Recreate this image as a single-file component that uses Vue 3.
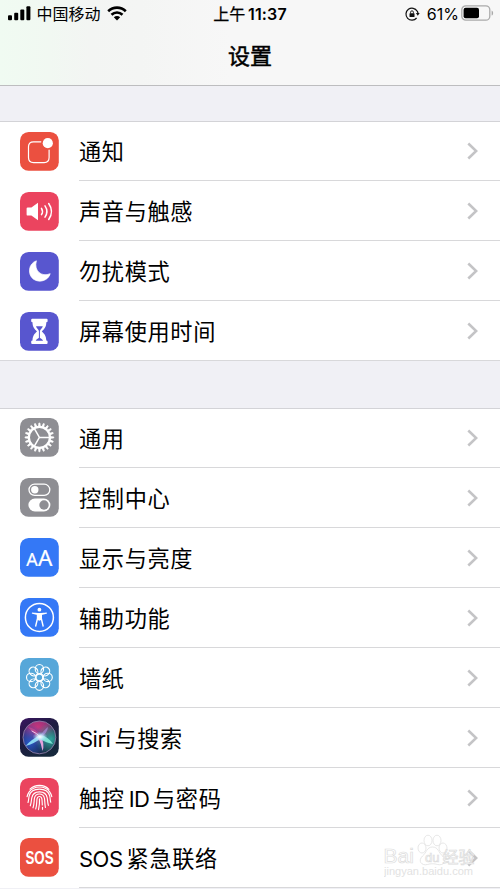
<script setup>
const groups = [
  {
    name: 'first',
    rows: [
      { icon: 'notify', label: '通知', bg: '#eb5040' },
      { icon: 'sound', label: '声音与触感', bg: '#eb445f' },
      { icon: 'moon', label: '勿扰模式', bg: '#5856cf' },
      { icon: 'hourglass', label: '屏幕使用时间', bg: '#5856cf' },
    ],
  },
  {
    name: 'second',
    rows: [
      { icon: 'gear', label: '通用', bg: '#8e8e93' },
      { icon: 'control', label: '控制中心', bg: '#8e8e93' },
      { icon: 'display', label: '显示与亮度', bg: '#3478f6' },
      { icon: 'access', label: '辅助功能', bg: '#3478f6' },
      { icon: 'wallpaper', label: '墙纸', bg: '#57a7d9' },
      { icon: 'siri', latin: 'Siri', label: '与搜索', bg: '#1b1b3a' },
      { icon: 'touch', label: '触控', latin2: 'ID', label2: '与密码', bg: '#eb445f' },
      { icon: 'sos', latin: 'SOS', label: '紧急联络', bg: '#eb5040' },
    ],
  },
]
const teeth = Array.from({ length: 20 }, (_, i) => i * 18)
const petals = Array.from({ length: 8 }, (_, i) => i * 45)
</script>

<template>
  <main class="phone">
    <header class="header">
      <div class="status">
        <div class="carrier">
          <svg class="signal" width="23" height="15" viewBox="0 0 23 15">
            <rect x="0" y="9.2" width="4" height="5" rx="1" />
            <rect x="6.2" y="6.8" width="4" height="7.4" rx="1" />
            <rect x="12.3" y="3.6" width="4" height="10.6" rx="1" />
            <rect x="18.4" y="0.2" width="4" height="14" rx="1" />
          </svg>
          <span class="operator">中国移动</span>
          <svg class="wifi" width="20" height="15" viewBox="0 0 20 15">
            <path d="M1.2 5.2C6.2.4 13.8.4 18.8 5.2" />
            <path d="M4.5 8.7c3.1-3 7.9-3 11 0" />
            <path class="solid" d="M6.8 11.2c1.8-1.6 4.6-1.6 6.4 0L10 14.4z" />
          </svg>
        </div>
        <div class="time"><span class="am">上午</span>11:37</div>
        <div class="power">
          <svg width="15" height="14" viewBox="0 0 15 14">
            <path d="M12.2 4.2A6 6 0 1 0 11.6 11M12.3 4.1A6 6 0 0 1 13 7" fill="none" stroke="#111" stroke-width="1.2" />
            <path d="M10.9 6.1h3.8l-1.9 2.6z" fill="#111" />
            <rect x="4.5" y="6.2" width="5" height="3.8" rx=".5" fill="#111" />
            <path d="M5.6 6.5V5.2a1.400 1.400 0 0 1 2.800 0v1.300" fill="none" stroke="#111" stroke-width=".9" />
          </svg>
          <span class="percent">61%</span>
          <svg class="battery" width="33" height="16" viewBox="0 0 33 16">
            <rect x=".8" y=".8" width="28" height="14.4" rx="4" fill="none" stroke="#aaa" stroke-width="1.3" />
            <rect x="2.6" y="2.8" width="15.4" height="10.4" rx="2" fill="#000" />
            <path d="M30.6 5.4c2 .8 2 4.4 0 5.2z" fill="#aaa" />
          </svg>
        </div>
      </div>
      <h1 class="title">设置</h1>
    </header>

    <section v-for="g in groups" :key="g.name" class="group" :class="g.name">
      <div v-for="r in g.rows" :key="r.icon" class="row">
        <svg class="icon" viewBox="0 0 39 39">
          <defs v-if="r.icon === 'siri'">
            <linearGradient id="siriBg" x1="0" y1="0" x2="0.6" y2="1">
              <stop offset="0" stop-color="#3a1560" />
              <stop offset=".5" stop-color="#1d1c40" />
              <stop offset="1" stop-color="#16283c" />
            </linearGradient>
            <radialGradient id="siriPink" cx=".45" cy=".2" r=".55">
              <stop offset="0" stop-color="#c8347c" />
              <stop offset=".5" stop-color="#b83a86" stop-opacity=".8" />
              <stop offset="1" stop-color="#d8327c" stop-opacity="0" />
            </radialGradient>
            <radialGradient id="siriBlue" cx=".2" cy=".65" r=".55">
              <stop offset="0" stop-color="#2857c8" />
              <stop offset="1" stop-color="#2857c8" stop-opacity="0" />
            </radialGradient>
            <radialGradient id="siriTeal" cx=".85" cy=".55" r=".5">
              <stop offset="0" stop-color="#2fa59c" />
              <stop offset="1" stop-color="#2fa59c" stop-opacity="0" />
            </radialGradient>
            <radialGradient id="siriGlow">
              <stop offset="0" stop-color="#fff" />
              <stop offset=".35" stop-color="#d6f2ff" stop-opacity=".8" />
              <stop offset="1" stop-color="#9fd6ff" stop-opacity="0" />
            </radialGradient>
          </defs>
          <rect width="38.8" height="38.8" rx="8.6" :fill="r.icon === 'siri' ? 'url(#siriBg)' : r.bg" />

          <g v-if="r.icon === 'notify'">
            <path d="M20.8 9.8H13.5q-5 0-5 5v10.8q0 5 5 5h10.600q5 0 5-5V18" fill="none" stroke="#fff" stroke-width="1.2" stroke-linecap="round" />
            <circle cx="27.8" cy="11.2" r="5.1" fill="#fff" />
          </g>

          <g v-else-if="r.icon === 'sound'">
            <path d="M7.8 15.4h3.6l6.6-4.7v17.6l-6.6-4.7H7.8q-1.2 0-1.2-1.2v-5.8q0-1.2 1.2-1.2z" fill="#fff" />
            <path d="M21.5 16.3q2 3.2 0 6.4M25 13.9q3.8 5.6 0 11.2M28.7 11.5q5.6 8 0 16" fill="none" stroke="#fff" stroke-width="1.5" stroke-linecap="round" />
          </g>

          <path v-else-if="r.icon === 'moon'" d="M16.4 8.8C8.2 11.5 7.3 22.8 13.5 27.2 19.5 31.3 28.2 28.6 30.2 21.7 21.5 25.4 13.5 18.8 16.4 8.8z" fill="#fff" stroke="#fff" stroke-width=".7" stroke-linejoin="round" />

          <g v-else-if="r.icon === 'hourglass'">
            <path d="M12.2 6.8h14.400q1 0 1 1v1.400q0 1-1.300 1c0 4.900-2.100 7-4.500 9.200 2.400 2.200 4.500 4.300 4.500 9.200q1.300 0 1.300 1V31q0 1-1 1H12.200q-1 0-1-1v-1.400q0-1 1.300-1c0-4.900 2.100-7 4.500-9.200-2.400-2.200-4.500-4.300-4.500-9.200q-1.300 0-1.300-1V7.800q0-1 1-1z" fill="#fff" />
            <path d="M16 14.3h6.800c-.7 2.300-2.300 3-2.900 4.700v6.800c1.100 1 2.500 1.600 3.200 3h-7.400c.7-1.400 2.100-2 3.200-3V19c-.6-1.700-2.200-2.400-2.900-4.700z" :fill="r.bg" />
          </g>

          <g v-else-if="r.icon === 'gear'" fill="none" stroke="#fff">
            <circle cx="19.4" cy="19.4" r="10.5" stroke-width="2.2" />
            <path v-for="a in teeth" :key="a" d="M18.4 8.8L18.900 5h1l.5 3.800z" fill="#fff" stroke-width=".7" :transform="`rotate(${a} 19.4 19.4)`" />
            <path d="M19.4 19.4H30M19.4 19.4l-5.3-9.2M19.4 19.4l-5.3 9.2" stroke-width="1.5" />
          </g>

          <g v-else-if="r.icon === 'control'">
            <rect x="9" y="6.2" width="20.8" height="11.2" rx="5.6" fill="none" stroke="#fff" stroke-width="1.3" />
            <circle cx="14.8" cy="11.8" r="3.7" fill="#fff" />
            <rect x="8.4" y="20.5" width="22" height="13" rx="6.5" fill="#fff" />
            <circle cx="24" cy="27" r="4.7" :fill="r.bg" />
          </g>

          <g v-else-if="r.icon === 'display'" class="letters">
            <text x="6.2" y="27.7" font-size="18">A</text>
            <text x="18" y="27.7" font-size="22.5">A</text>
          </g>

          <g v-else-if="r.icon === 'access'">
            <circle cx="19.4" cy="19.4" r="14" fill="none" stroke="#fff" stroke-width="1.5" />
            <circle cx="19.4" cy="11.7" r="1.9" fill="#fff" />
            <path d="M12.5 15.1l5 1.2v4.2L15.7 28M26.3 15.1l-5 1.2v4.2l1.8 7.5M12.5 15.1l5.2.7h3.4l5.2-.7" fill="none" stroke="#fff" stroke-width="1.4" stroke-linecap="round" stroke-linejoin="round" />
            <path d="M17.3 16h4.2v5.8l-2.1 1-2.1-1z" fill="#fff" />
          </g>

          <g v-else-if="r.icon === 'wallpaper'" fill="none" stroke="#fff" stroke-width="1.15">
            <ellipse v-for="a in petals" :key="a" cx="19.4" cy="11" rx="4.2" ry="4.5" :transform="`rotate(${a} 19.4 19.4)`" />
            <circle cx="19.4" cy="19.4" r="3.3" />
          </g>

          <g v-else-if="r.icon === 'siri'">
            <circle cx="19.4" cy="19.4" r="16.4" fill="url(#siriPink)" />
            <circle cx="19.4" cy="19.4" r="16.4" fill="url(#siriBlue)" />
            <circle cx="19.4" cy="19.4" r="16.4" fill="url(#siriTeal)" />
            <path d="M18 20L8 9q8 1 12 9z" fill="#db4b8f" opacity=".6" />
            <path d="M20 17Q12 21 5.5 28 14 26 21 20z" fill="#8fdcf6" opacity=".95" />
            <path d="M18 19q3 6 4.500 14Q25 27 21 18z" fill="#efa5df" opacity=".95" />
            <path d="M20 16.5q8 2 13 9.500Q27 25 19 20.500z" fill="#83ecdb" opacity=".9" />
            <path d="M19 19q5-7 9-10-1 7-7 10z" fill="#a286d0" opacity=".8" />
            <path d="M12 13q5 2 8 6" fill="none" stroke="#e8c6f0" stroke-width="1" stroke-linecap="round" />
            <ellipse cx="20" cy="18.8" rx="7.5" ry="5" fill="url(#siriGlow)" />
            <circle cx="19.4" cy="19.4" r="16.4" fill="none" stroke="#8c7aa6" stroke-width=".9" />
          </g>

          <g v-else-if="r.icon === 'touch'" fill="none" stroke="#fff" stroke-width="1.15" stroke-linecap="round">
            <path d="M10 11.2c5-5.2 14-5.2 18.9.1" />
            <path d="M7.1 18.6c.4-2 1.1-3.4 2.1-4.8 5-6.4 15.6-6.4 20.5 0 1 1.4 1.7 2.9 2.1 4.8" />
            <path d="M8 24.5c.9-3 .6-4.7 1.2-6.6 2.5-9 17.9-9 20.5 0 .6 2 .3 3.6 1 6.3" />
            <path d="M10.3 27.8c1.2-3.3 1-5.8 1.5-8 1.5-8 13.9-8 15.4 0 .5 2.4.3 4.8 1.2 7.600" />
            <path d="M13 29.8c1.3-3.6 1-6.600 1.4-9.300 1-6 9-6 10.100 0 .4 2.600.2 5.500.9 9" />
            <path d="M15.700 31c1.300-4 .9-7.400 1.300-10 .5-3.300 4.400-3.300 4.900 0 .3 2 .3 4 .4 6M22.500 29.200v2.100" />
            <path d="M19.500 20.800c.2 4-.1 7.300-1 10.800" />
          </g>

          <text v-else class="sos" transform="translate(5.4 26.2) scale(.72 1)" font-size="18.5">SOS</text>
        </svg>
        <div class="cell">
          <span class="label"><span v-if="r.latin" class="latin before">{{ r.latin }}</span>{{ r.label }}<span v-if="r.latin2" class="latin between">{{ r.latin2 }}</span>{{ r.label2 }}</span>
          <svg class="chevron" width="11" height="18" viewBox="0 0 11 18">
            <path d="M1.3 1.5L9.2 9l-7.900 7.500" />
          </svg>
        </div>
      </div>
    </section>

    <svg class="watermark" width="100" height="50" viewBox="0 0 100 50">
      <g class="outlined">
        <text x="-0.5" y="29" font-size="21">Bai</text>
        <ellipse cx="38" cy="14" rx="4" ry="5" />
        <ellipse cx="44" cy="6.5" rx="4" ry="5.300" />
        <ellipse cx="53" cy="6.5" rx="4" ry="5.300" />
        <ellipse cx="59" cy="14" rx="4" ry="5" />
        <path d="M48.5 13c6 0 6 6 10 9 5 5 1 10-5 8.500-3-1-7-1-10 0-6 1.500-10-3.500-5-8.500 4-3 4-9 10-9z" />
        <text x="41" y="27.5" font-size="13">du</text>
        <text x="58.5" y="28.5" font-size="16">经验</text>
      </g>
      <text class="site" x="0" y="41" font-size="10.5" textLength="89" lengthAdjust="spacingAndGlyphs">jingyan.baidu.com</text>
    </svg>
  </main>
</template>

<style>
body {
  margin: 0;
  overflow: hidden;
  background: #efeff4;
}
</style>

<style scoped>
.phone {
  position: relative;
  box-sizing: border-box;
  width: 500px;
  height: 889px;
  overflow: hidden;
  background: #f0f0f5;
  color: #000;
  font-family: Inter, "Noto Sans CJK SC", sans-serif;
}
.header {
  box-sizing: border-box;
  height: 86px;
  border-bottom: 1px solid #bdbdbf;
  background: linear-gradient(90deg, #f0fbf2 0, #f1f8f2 50px, #f3f5f3 90px, #f4f5f4 140px, #f7f7f7 230px);
}
.status {
  display: grid;
  grid-template-columns: 1fr 100px 1fr;
  align-items: center;
  height: 28px;
}
.carrier {
  display: flex;
  align-items: center;
  padding-left: 8px;
}
.operator {
  margin-left: 5.500px;
  font-size: 16px;
  line-height: 24px;
}
.signal {
  margin-top: -2px;
}
.wifi {
  margin: -2px 0 0 6.500px;
  fill: none;
  stroke: #000;
  stroke-width: 2.6;
}
.wifi .solid {
  fill: #000;
  stroke: none;
}
.time {
  font-size: 16px;
  font-weight: 600;
  line-height: 24px;
  letter-spacing: 0.15px;
  text-align: center;
  white-space: nowrap;
}
.am {
  margin-right: 2.500px;
  font-weight: 400;
  -webkit-text-stroke: 0.25px #000;
}
.power {
  display: flex;
  align-items: center;
  justify-content: flex-end;
  padding-right: 6px;
}
.percent {
  margin: 0 2px 0 7px;
  font-size: 16px;
  line-height: 24px;
}
.battery {
  margin-top: -2px;
}
.title {
  margin: 11px 0 0;
  font-size: 22px;
  font-weight: 400;
  line-height: 34px;
  text-align: center;
  -webkit-text-stroke: 0.5px #000;
}
.group {
  background: #fff;
  box-shadow: inset 0 1px #d3d3d7;
}
.first {
  margin-top: 35px;
}
.second {
  margin-top: 47px;
}
.row {
  display: flex;
  align-items: flex-start;
  box-sizing: border-box;
  height: 60px;
  padding-left: 20px;
}
.icon {
  flex: none;
  width: 39px;
  height: 39px;
  margin: 11px 20px 0 0;
}
.second .icon {
  margin-top: 10.4px;
}
.cell {
  display: flex;
  flex: 1;
  align-items: center;
  justify-content: space-between;
  box-sizing: border-box;
  height: 60px;
  padding-right: 22px;
  border-bottom: 1px solid #d8d8da;
}
.first .row:last-child {
  box-shadow: inset 0 -1px #d8d8dc;
}
.label {
  padding-top: 2px;
  font-size: 22.2px;
  line-height: 32px;
  letter-spacing: 0.65px;
  white-space: nowrap;
}
.latin {
  font-size: 22px;
  letter-spacing: -0.5px;
}
.before {
  margin-right: 4px;
}
.between {
  margin: 0 3.500px 0 4px;
}
.chevron {
  fill: none;
  stroke: #c4c4c6;
  stroke-width: 2.6;
}
.letters text {
  fill: #fff;
  stroke: #fff;
  stroke-width: 0.2;
  font-family: "Noto Sans", sans-serif;
}
.sos {
  fill: #fff;
  font-family: "Liberation Sans", sans-serif;
  font-weight: 700;
}
.watermark {
  position: absolute;
  left: 384px;
  top: 834px;
}
.outlined {
  fill: #fff;
  stroke: #dcdcdc;
  stroke-width: 0.7;
  font-family: "Liberation Sans", "Noto Sans CJK SC", sans-serif;
  font-weight: 400;
}
.site {
  fill: #e2e2e2;
  font-family: "Liberation Sans", sans-serif;
}
</style>
